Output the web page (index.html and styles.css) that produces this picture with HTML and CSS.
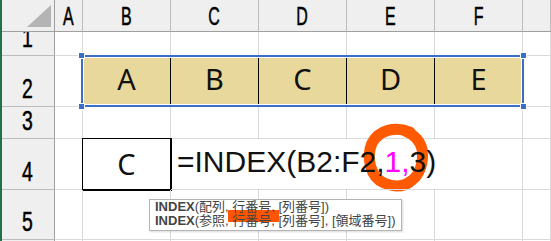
FILE: index.html
```html
<!DOCTYPE html>
<html lang="ja">
  <head>
    <meta charset="UTF-8" />
    <meta name="viewport" content="width=device-width, initial-scale=1.0" />
    <title>INDEX</title>
    <link rel="stylesheet" href="styles.css">
  </head>
  <body>
    <div class="sheet">
      <!-- column headers -->
      <div class="cell corner">
        <svg width="24" height="22" viewBox="0 0 24 22"><polygon points="0,22 24,22 24,0" fill="#b4b4b4" /></svg>
      </div>
      <div class="cell col-head"><span>A</span></div>
      <div class="cell col-head"><span>B</span></div>
      <div class="cell col-head"><span>C</span></div>
      <div class="cell col-head"><span>D</span></div>
      <div class="cell col-head"><span>E</span></div>
      <div class="cell col-head"><span>F</span></div>
      <div class="cell col-head"></div>

      <!-- row 1 -->
      <div class="cell row-head"><span>1</span></div>
      <div class="cell"></div>
      <div class="cell"></div>
      <div class="cell"></div>
      <div class="cell"></div>
      <div class="cell"></div>
      <div class="cell"></div>
      <div class="cell"></div>

      <!-- row 2 -->
      <div class="cell row-head"><span>2</span></div>
      <div class="cell"></div>
      <div class="cell fill">A</div>
      <div class="cell fill">B</div>
      <div class="cell fill">C</div>
      <div class="cell fill">D</div>
      <div class="cell fill">E</div>
      <div class="cell"></div>

      <!-- row 3 -->
      <div class="cell row-head"><span>3</span></div>
      <div class="cell"></div>
      <div class="cell"></div>
      <div class="cell"></div>
      <div class="cell"></div>
      <div class="cell"></div>
      <div class="cell"></div>
      <div class="cell"></div>

      <!-- row 4 -->
      <div class="cell row-head"><span>4</span></div>
      <div class="cell"></div>
      <div class="cell result">C</div>
      <div class="cell formula">=INDEX(B2:F2,<span class="arg">1,</span>3)</div>
      <div class="cell"></div>

      <!-- row 5 -->
      <div class="cell row-head"><span>5</span></div>
      <div class="cell"></div>
      <div class="cell"></div>
      <div class="cell"></div>
      <div class="cell"></div>
      <div class="cell"></div>
      <div class="cell"></div>
      <div class="cell"></div>

      <!-- row 6 (top edge only) -->
      <div class="cell row-head"></div>
      <div class="cell"></div>
      <div class="cell"></div>
      <div class="cell"></div>
      <div class="cell"></div>
      <div class="cell"></div>
      <div class="cell"></div>
      <div class="cell"></div>
    </div>

    <!-- range finder around B2:F2 -->
    <div class="range">
      <span class="handle tl"></span>
      <span class="handle tr"></span>
      <span class="handle bl"></span>
      <span class="handle br"></span>
    </div>

    <!-- hand drawn mark -->
    <svg class="mark" width="551" height="241" viewBox="0 0 551 241">
      <path d="M 410 132 C 395 126, 379 130, 372 143 C 366 157, 370 177, 384 183 C 394 187, 404 187, 411 181 C 420 175, 424 162, 422 149 C 420 141, 415 135, 405 131"
            fill="none" stroke="#ff5a00" stroke-width="11" stroke-linecap="round" />
    </svg>

    <div class="tooltip">
      <span class="marker"></span>
      <div class="tip-line"><b>INDEX</b>(配列, 行番号, [列番号])</div>
      <div class="tip-line"><b>INDEX</b>(参照, 行番号, [列番号], [領域番号])</div>
    </div>
  </body>
</html>
```

FILE: styles.css
```css
* {
  box-sizing: border-box;
}
body {
  margin: 0;
  position: relative;
  width: 551px;
  height: 241px;
  overflow: hidden;
  background: #fff;
  font-family: "Liberation Sans", Arial, sans-serif;
  color: #000;
}
.sheet {
  display: grid;
  grid-template-columns: 53px 28px repeat(5, 88px) 1fr;
  grid-template-rows: 32px 24px 51px 32px 51px 50px 1fr;
  height: 241px;
  border-left: 2px solid #217346;
}
.cell {
  border-right: 1px solid #dadada;
  border-bottom: 1px solid #dadada;
  overflow: hidden;
}

.corner {
  background: #efefef;
  border-right-color: #9f9f9f;
  border-bottom-color: #9f9f9f;
  display: flex;
  justify-content: flex-end;
  align-items: flex-end;
  padding: 0 3px 4px 0;
}
.corner svg {
  display: block;
}
.col-head {
  background: #efefef;
  border-right-color: #bcbcbc;
  border-bottom-color: #9f9f9f;
  text-align: center;
  font-size: 25px;
  line-height: 31px;
  padding-top: 1px;
}
.col-head span {
  display: inline-block;
  transform: scaleX(0.64);
  -webkit-text-stroke: 0.5px #000;
}
.row-head {
  background: #efefef;
  border-right-color: #9f9f9f;
  border-bottom-color: #bcbcbc;
  display: flex;
  align-items: flex-end;
  justify-content: center;
  padding-bottom: 3px;
  font-size: 27px;
  line-height: 1;
}
.row-head span {
  display: inline-block;
  transform: scaleX(0.72);
  -webkit-text-stroke: 0.5px #000;
}

.fill {
  background: #e9d89b;
  border-right-color: #000;
  display: flex;
  align-items: center;
  justify-content: center;
  font-family: "Noto Sans", sans-serif;
  font-size: 29px;
  line-height: 1;
  padding-bottom: 5px;
  color: #111;
}
.result {
  border-right-color: #000;
  border-bottom-color: #000;
  box-shadow: 0 0 0 1px #000;
  display: flex;
  align-items: center;
  justify-content: center;
  font-family: "Noto Sans", sans-serif;
  font-size: 29px;
  line-height: 1;
  padding-bottom: 2px;
  color: #111;
}
.formula {
  grid-column: span 4;
  position: relative;
  z-index: 2;
  overflow: visible;
  white-space: nowrap;
  font-size: 30px;
  line-height: 1;
  padding: 8px 0 0 6px;
  color: #111;
}
.arg {
  color: #ff00ff;
}

.range {
  position: absolute;
  left: 81px;
  top: 55px;
  width: 443px;
  height: 52px;
  border: 2px solid #3a6fc9;
  box-shadow: inset 0 0 0 1px #fff;
}
.handle {
  position: absolute;
  width: 7px;
  height: 7px;
  background: #3a6fc9;
  border: 1px solid #fff;
}
.handle.tl { left: -5px; top: -5px; }
.handle.tr { right: -5px; top: -5px; }
.handle.bl { left: -5px; bottom: -5px; }
.handle.br { right: -5px; bottom: -5px; }

.mark {
  position: absolute;
  left: 0;
  top: 0;
  z-index: 1;
}

.tooltip {
  position: absolute;
  left: 149px;
  top: 199px;
  width: 253px;
  height: 32px;
  z-index: 3;
  background: #fff;
  border: 1px solid #b4b4b4;
  box-shadow: 1px 1px 2px rgba(0, 0, 0, 0.15);
  padding: 0 0 0 5px;
  font-family: "Liberation Sans", "Noto Sans CJK JP", sans-serif;
  font-size: 13px;
  color: #444;
  white-space: nowrap;
}
.tip-line {
  position: relative;
  z-index: 1;
  height: 13.5px;
  line-height: 13.5px;
}
.marker {
  position: absolute;
  left: 78px;
  top: 10px;
  width: 51px;
  height: 12px;
  background: #ff5500;
}
```
